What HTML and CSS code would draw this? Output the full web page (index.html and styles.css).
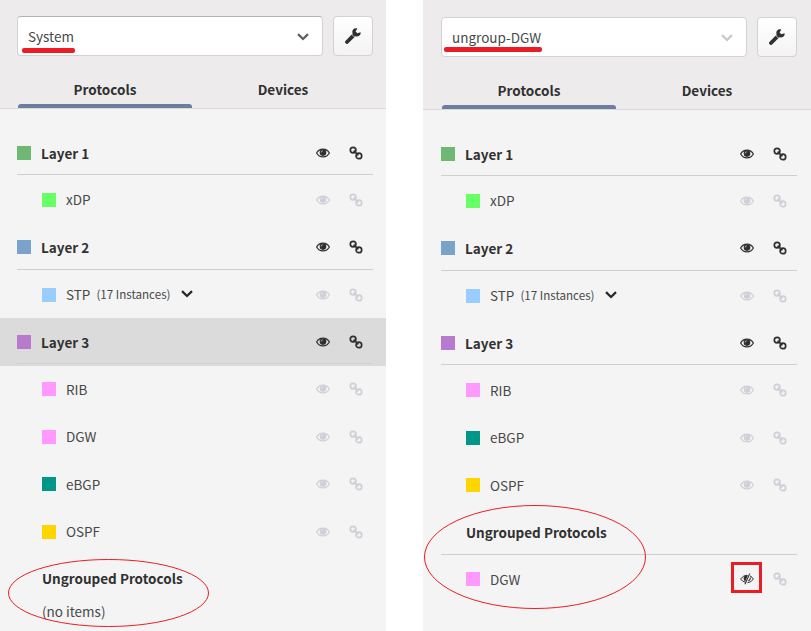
FILE: index.html
```
<!DOCTYPE html>
<html lang="en">
<head>
<meta charset="utf-8">
<title>Protocols</title>
<link rel="stylesheet" href="styles.css">
</head>
<body>
<svg class="defs" aria-hidden="true">
  <defs>
    <symbol id="eye" viewBox="0 0 14 10"><path d="M.6 5C3.500-.2 10.500-.2 13.400 5C10.500 10.200 3.500 10.200.6 5Z" fill="none" stroke="currentColor" stroke-width="1.200"/><circle cx="7" cy="4.600" r="3.300" fill="currentColor"/><path d="M5.200 4.400Q5.300 3.100 6.700 2.800" fill="none" stroke="#f4f4f4" stroke-width=".7"/></symbol>
    <symbol id="eye-off" viewBox="0 0 14 12"><path d="M5.500 9.400Q2.500 8.700.6 6Q3 2.300 7 2.200M10 2.900Q12.300 4 13.400 6Q11.300 9.500 7.500 9.700" fill="none" stroke="currentColor" stroke-width="1"/><path d="M8 2.200Q3.500 1.800 3.600 5.600Q3.900 8 5.200 8.500Z" fill="currentColor"/><path d="M9.700.6L5 11.200M10.500 4.500Q10.500 6.800 8.300 8" fill="none" stroke="currentColor" stroke-width="1.100"/></symbol>
    <symbol id="link" viewBox="0 0 14 14"><g fill="none" stroke="currentColor" stroke-width="1.700"><circle cx="4.100" cy="4.100" r="2.800"/><circle cx="9.900" cy="9.900" r="2.800"/><path d="M4.600 4.600L9.400 9.400"/></g></symbol>
    <symbol id="wrench" viewBox="0 0 16 16"><path d="M15.500 4.200L12.400 5.300L10.600 3.600L12.300.5C9.300-.3 7.300 1.500 7.300 3.800L7.500 5.800C8 7.600 9.300 8.400 11.500 8.500C14.500 8.400 16.200 6.300 15.500 4.200Z" fill="currentColor"/><path d="M7.800 8.200L2 14" fill="none" stroke="currentColor" stroke-width="3.800" stroke-linecap="round"/><path d="M6.500 6.100L9.700 9.300" stroke="#fafafa" stroke-width=".7"/></symbol>
    <symbol id="chevron" viewBox="0 0 12 8"><path d="M1 1.200L6 6L11 1.200" fill="none" stroke="currentColor" stroke-width="2.300"/></symbol>
  </defs>
</svg>
<main class="board">
  <section class="panel">
    <header class="head">
      <div class="controls">
        <div class="select active"><span class="value">System</span><svg class="arrow"><use href="#chevron"/></svg></div>
        <button class="tool" aria-label="Settings"><svg><use href="#wrench"/></svg></button>
      </div>
      <nav class="tabs"><span class="tab current">Protocols</span><span class="tab">Devices</span></nav>
    </header>
    <div class="list">
      <div class="row layer"><i class="swatch l1"></i><span class="name">Layer 1</span><svg class="eye"><use href="#eye"/></svg><svg class="link"><use href="#link"/></svg></div>
      <div class="row item"><i class="swatch xdp"></i><span class="name">xDP</span><svg class="eye"><use href="#eye"/></svg><svg class="link"><use href="#link"/></svg></div>
      <div class="row layer"><i class="swatch l2"></i><span class="name">Layer 2</span><svg class="eye"><use href="#eye"/></svg><svg class="link"><use href="#link"/></svg></div>
      <div class="row item"><i class="swatch stp"></i><span class="name">STP<small>(17 Instances)</small><svg class="expand"><use href="#chevron"/></svg></span><svg class="eye"><use href="#eye"/></svg><svg class="link"><use href="#link"/></svg></div>
      <div class="row layer hover"><i class="swatch l3"></i><span class="name">Layer 3</span><svg class="eye"><use href="#eye"/></svg><svg class="link"><use href="#link"/></svg></div>
      <div class="row item"><i class="swatch pink"></i><span class="name">RIB</span><svg class="eye"><use href="#eye"/></svg><svg class="link"><use href="#link"/></svg></div>
      <div class="row item"><i class="swatch pink"></i><span class="name">DGW</span><svg class="eye"><use href="#eye"/></svg><svg class="link"><use href="#link"/></svg></div>
      <div class="row item"><i class="swatch ebgp"></i><span class="name">eBGP</span><svg class="eye"><use href="#eye"/></svg><svg class="link"><use href="#link"/></svg></div>
      <div class="row item"><i class="swatch ospf"></i><span class="name">OSPF</span><svg class="eye"><use href="#eye"/></svg><svg class="link"><use href="#link"/></svg></div>
      <div class="row group"><span class="name">Ungrouped Protocols</span></div>
      <div class="empty">(no items)</div>
    </div>
    <div class="mark underline-system"></div>
    <svg class="mark ring-left" viewBox="0 0 202 69"><ellipse cx="100.500" cy="34" rx="100" ry="33.500"/></svg>
  </section>
  <section class="panel second">
    <header class="head">
      <div class="controls">
        <div class="select"><span class="value">ungroup-DGW</span><svg class="arrow"><use href="#chevron"/></svg></div>
        <button class="tool" aria-label="Settings"><svg><use href="#wrench"/></svg></button>
      </div>
      <nav class="tabs"><span class="tab current">Protocols</span><span class="tab">Devices</span></nav>
    </header>
    <div class="list">
      <div class="row layer"><i class="swatch l1"></i><span class="name">Layer 1</span><svg class="eye"><use href="#eye"/></svg><svg class="link"><use href="#link"/></svg></div>
      <div class="row item"><i class="swatch xdp"></i><span class="name">xDP</span><svg class="eye"><use href="#eye"/></svg><svg class="link"><use href="#link"/></svg></div>
      <div class="row layer"><i class="swatch l2"></i><span class="name">Layer 2</span><svg class="eye"><use href="#eye"/></svg><svg class="link"><use href="#link"/></svg></div>
      <div class="row item"><i class="swatch stp"></i><span class="name">STP<small>(17 Instances)</small><svg class="expand"><use href="#chevron"/></svg></span><svg class="eye"><use href="#eye"/></svg><svg class="link"><use href="#link"/></svg></div>
      <div class="row layer"><i class="swatch l3"></i><span class="name">Layer 3</span><svg class="eye"><use href="#eye"/></svg><svg class="link"><use href="#link"/></svg></div>
      <div class="row item"><i class="swatch pink"></i><span class="name">RIB</span><svg class="eye"><use href="#eye"/></svg><svg class="link"><use href="#link"/></svg></div>
      <div class="row item"><i class="swatch ebgp"></i><span class="name">eBGP</span><svg class="eye"><use href="#eye"/></svg><svg class="link"><use href="#link"/></svg></div>
      <div class="row item"><i class="swatch ospf"></i><span class="name">OSPF</span><svg class="eye"><use href="#eye"/></svg><svg class="link"><use href="#link"/></svg></div>
      <div class="row group ruled"><span class="name">Ungrouped Protocols</span></div>
      <div class="row item last"><i class="swatch pink"></i><span class="name">DGW</span><svg class="eye off"><use href="#eye-off"/></svg><svg class="link"><use href="#link"/></svg></div>
    </div>
    <div class="mark underline-dgw"></div>
    <div class="mark box"></div>
    <svg class="mark ring-right" viewBox="0 0 223 105"><ellipse cx="112" cy="53" rx="110.500" ry="51.500"/></svg>
  </section>
</main>
</body>
</html>
```
FILE: styles.css
```
* { box-sizing: border-box; }
body { margin: 0; background: #fff; color: #303030; font: 13.5px/20px "Noto Sans CJK SC", sans-serif; }
svg { display: block; }
.defs { position: absolute; width: 0; height: 0; }
.board { display: grid; grid-template-columns: 386px 388px; column-gap: 37px; height: 631px; overflow: hidden; }
.panel { position: relative; background: #f4f4f4; height: 631px; overflow: hidden; }
.head { height: 109px; padding: 16px 13px 0 17px; background: #edebec; border-bottom: 1px solid #d9d9d9; }
.controls { display: flex; gap: 10px; }
.select { width: 306px; height: 40px; padding: 0 13px 0 10px; display: flex; align-items: center; justify-content: space-between; background: #fff; border: 1px solid #d2d2d2; border-radius: 4px; color: #c9c9c9; }
.select.active { border-top-color: #b3b3b3; color: #606060; }
.value { color: #484848; padding-bottom: 1px; }
.arrow { width: 12px; height: 8px; margin-top: 1px; }
.tool { width: 40px; height: 40px; padding: 0; display: grid; place-items: center; color: #303030; background: linear-gradient(#fff, #f3f3f3); border: 1px solid #d2d2d2; border-radius: 4px; }
.tool svg { width: 16px; height: 16px; }
.tabs { display: flex; margin-top: 22px; padding-left: 1px; gap: 4px; }
.tab { width: 174px; height: 30px; padding-top: 1px; text-align: center; font-weight: 700; }
.tab.current { background: linear-gradient(#6d7d9e, #6d7d9e) 0 100% / 100% 4px no-repeat; clip-path: polygon(0 0, 100% 0, 100% 100%, 0 100%); }
.tab.current { background: none; position: relative; }
.tab.current::after { content: ""; position: absolute; left: 0; right: 0; bottom: 0; height: 4px; background: #6d7d9e; border-radius: 3px 3px 0 0; }
.list { padding-top: 19.82px; }
.row { height: 47.38px; display: flex; align-items: center; padding: 0 23px 0 17px; position: relative; }
.item, .group { padding-left: 42px; }
.layer .name, .group .name { font-weight: 700; }
.layer::after, .ruled::after { content: ""; height: 1px; background: #cfcfcf; position: absolute; left: 17px; right: 13px; bottom: 1.400px; }
.hover { background: #dbdbdb; }
.swatch { width: 14px; height: 14px; margin-right: 10px; flex: none; }
.name { flex: 1; display: flex; align-items: center; white-space: nowrap; }
.item .name { color: #484848; padding-bottom: .8px; }
.group .name { padding-bottom: 2px; }
.name small { font-size: 11.6px; margin-left: 6px; }
.expand { width: 12px; height: 8px; margin-left: 10.5px; color: #282828; }
.eye { width: 14px; height: 10px; margin-right: 19px; flex: none; }
.eye.off { height: 12px; }
.link { width: 14px; height: 14px; flex: none; }
.item .eye, .item .link { color: #cfcfd8; }
.item .eye.off { color: #303030; }
.empty { padding-left: 42px; margin-top: -2px; color: #484848; }
.l1 { background: #6fb871; }
.l2 { background: #7aa3cc; }
.l3 { background: #b87acc; }
.hover::after { background: #d0d0d0; }
.xdp { background: #66ff66; }
.stp { background: #99ccff; }
.pink { background: #ff99ff; }
.ebgp { background: #009688; }
.ospf { background: #ffd500; }
.second .head { height: 110px; padding: 17px 14px 0 18px; }
.second .row { padding-left: 18px; padding-right: 24px; }
.second .item, .second .group { padding-left: 43px; }
.second .row::after { left: 18px; right: 14px; }
.second .last { height: 45.6px; }
.mark { position: absolute; }
.underline-system { left: 22px; top: 48px; width: 53px; height: 5px; border-radius: 2px; background: #ed1c24; }
.underline-dgw { left: 21px; top: 47px; width: 98px; height: 5px; border-radius: 2px; background: #ed1c24; }
.box { left: 308px; top: 562px; width: 31px; height: 31px; border: 3px solid #ed1c24; }
.ring-left, .ring-right { fill: none; stroke: #ed1c24; stroke-width: 1; }
.ring-left { left: 8px; top: 559px; width: 202px; height: 69px; }
.ring-right { left: 0; top: 504px; width: 223px; height: 105px; }
```
